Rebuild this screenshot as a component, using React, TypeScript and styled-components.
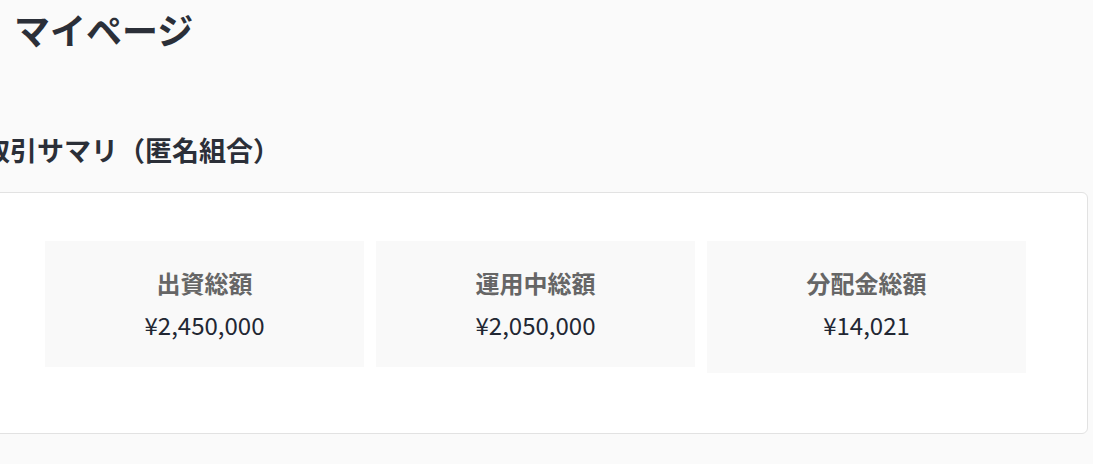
import React from 'react';
import styled, { createGlobalStyle } from 'styled-components';

const colors = {
  page: '#fafafa',
  card: '#ffffff',
  tile: '#f9f9f9',
  border: '#e2e2e2',
  heading: '#2b2f38',
  label: '#666666',
  value: '#222733',
};

const GlobalStyle = createGlobalStyle`
  html, body {
    margin: 0;
    padding: 0;
    background: ${colors.page};
    font-family: 'Noto Sans CJK JP', 'Noto Sans', sans-serif;
    overflow: hidden;
  }
`;

const Page = styled.main`
  display: flex;
  flex-direction: column;
  width: 1093px;
  height: 464px;
  overflow: hidden;
`;

const PageTitle = styled.h1`
  margin: 8px 0 0 14px;
  font-size: 36px;
  line-height: 42px;
  font-weight: 700;
  color: ${colors.heading};
`;

const Section = styled.section`
  display: flex;
  flex-direction: column;
  margin: 81px 5px 0 -17px;
`;

const SectionTitle = styled.h2`
  margin: 0 0 23px;
  font-size: 27px;
  line-height: 38px;
  font-weight: 700;
  color: ${colors.heading};
  white-space: nowrap;
`;

const Card = styled.div`
  background: ${colors.card};
  border: 1px solid ${colors.border};
  border-radius: 6px;
  padding: 48px 62px 60px 61px;
`;

const TileGrid = styled.div`
  display: grid;
  grid-template-columns: repeat(3, 319px);
  gap: 12px;
  align-items: start;
`;

const Tile = styled.div<{ $tall?: boolean }>`
  display: flex;
  flex-direction: column;
  align-items: center;
  gap: 7px;
  background: ${colors.tile};
  padding: 24px 16px ${(p) => (p.$tall ? 31 : 25)}px;
`;

const Label = styled.div`
  font-size: 24px;
  line-height: 35px;
  font-weight: 700;
  color: ${colors.label};
`;

const Value = styled.div`
  font-size: 24px;
  line-height: 35px;
  font-weight: 400;
  color: ${colors.value};
`;

const summary = [
  { label: '出資総額', value: '¥2,450,000' },
  { label: '運用中総額', value: '¥2,050,000' },
  { label: '分配金総額', value: '¥14,021', tall: true },
];

export default function App() {
  return (
    <>
      <GlobalStyle />
      <Page>
        <PageTitle>マイページ</PageTitle>
        <Section>
          <SectionTitle>取引サマリ（匿名組合）</SectionTitle>
          <Card>
            <TileGrid>
              {summary.map((s) => (
                <Tile key={s.label} $tall={s.tall}>
                  <Label>{s.label}</Label>
                  <Value>{s.value}</Value>
                </Tile>
              ))}
            </TileGrid>
          </Card>
        </Section>
      </Page>
    </>
  );
}
